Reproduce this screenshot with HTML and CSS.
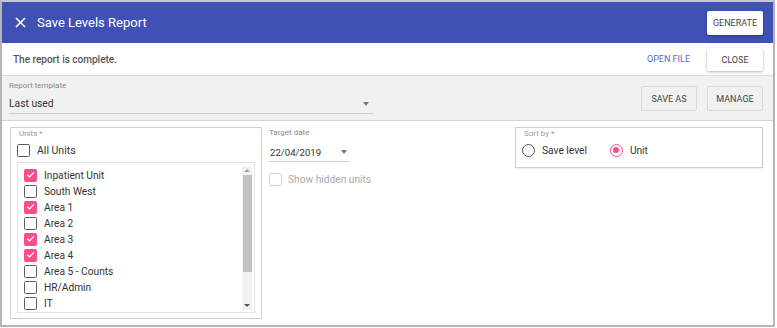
FILE: index.html
```html
<!DOCTYPE html>
<html lang="en">
<head>
    <meta charset="UTF-8">
    <title>Save Levels Report</title>
    <link rel="stylesheet" href="styles.css">
</head>
<body>
    <div class="dialog">
        <div class="header">
            <svg class="close-icon" width="11" height="11" viewBox="0 0 11 11">
                <path d="M1 1L10 10M10 1L1 10" stroke="#fff" stroke-width="1.6" fill="none"/>
            </svg>
            <span class="title">Save Levels Report</span>
            <button class="btn raised">GENERATE</button>
        </div>

        <div class="notice">
            <span class="notice-text">The report is complete.</span>
            <span class="link">OPEN FILE</span>
            <button class="btn raised">CLOSE</button>
        </div>

        <div class="template-row">
            <div class="field template-field">
                <div class="field-label">Report template</div>
                <div class="select">
                    <span>Last used</span>
                    <span class="arrow"></span>
                </div>
            </div>
            <button class="btn outlined">SAVE AS</button>
            <button class="btn outlined">MANAGE</button>
        </div>

        <div class="content">
            <div class="units-box">
                <div class="box-label">Units *</div>
                <div class="check-row all-units">
                    <span class="checkbox"></span>
                    <span>All Units</span>
                </div>
                <div class="unit-list">
                    <div class="items">
                        <div class="check-row"><span class="checkbox checked"><svg width="13" height="13" viewBox="0 0 13 13"><path d="M3.2 6.6l2.3 2.3 4.4-4.6" stroke="#fff" stroke-width="1.2" fill="none"/></svg></span><span>Inpatient Unit</span></div>
                        <div class="check-row"><span class="checkbox"></span><span>South West</span></div>
                        <div class="check-row"><span class="checkbox checked"><svg width="13" height="13" viewBox="0 0 13 13"><path d="M3.2 6.6l2.3 2.3 4.4-4.6" stroke="#fff" stroke-width="1.2" fill="none"/></svg></span><span>Area 1</span></div>
                        <div class="check-row"><span class="checkbox"></span><span>Area 2</span></div>
                        <div class="check-row"><span class="checkbox checked"><svg width="13" height="13" viewBox="0 0 13 13"><path d="M3.2 6.6l2.3 2.3 4.4-4.6" stroke="#fff" stroke-width="1.2" fill="none"/></svg></span><span>Area 3</span></div>
                        <div class="check-row"><span class="checkbox checked"><svg width="13" height="13" viewBox="0 0 13 13"><path d="M3.2 6.6l2.3 2.3 4.4-4.6" stroke="#fff" stroke-width="1.2" fill="none"/></svg></span><span>Area 4</span></div>
                        <div class="check-row"><span class="checkbox"></span><span>Area 5 - Counts</span></div>
                        <div class="check-row"><span class="checkbox"></span><span>HR/Admin</span></div>
                        <div class="check-row"><span class="checkbox"></span><span>IT</span></div>
                        <div class="check-row"><span class="checkbox"></span></div>
                    </div>
                    <div class="scrollbar">
                        <span class="scroll-up"></span>
                        <span class="thumb"></span>
                        <span class="scroll-down"></span>
                    </div>
                </div>
            </div>

            <div class="middle">
                <div class="field date-field">
                    <div class="field-label">Target date</div>
                    <div class="select">
                        <span>22/04/2019</span>
                        <span class="arrow"></span>
                    </div>
                </div>
                <div class="check-row disabled">
                    <span class="checkbox"></span>
                    <span>Show hidden units</span>
                </div>
            </div>

            <div class="sort-box">
                <div class="box-label">Sort by *</div>
                <div class="radios">
                    <div class="radio-row"><span class="radio"></span><span>Save level</span></div>
                    <div class="radio-row"><span class="radio selected"></span><span>Unit</span></div>
                </div>
            </div>
        </div>
    </div>
</body>
</html>
```

FILE: styles.css
```css
body {
    margin: 0;
    font-family: Roboto, "Liberation Sans", sans-serif;
    background-color: #fff;
    color: #333;
}

.dialog {
    width: 775px;
    height: 327px;
    box-sizing: border-box;
    border: 2px solid #b4b4b4;
    border-top-color: #c8c8c8;
    background-color: #fff;
    overflow: hidden;
}

.header {
    height: 41px;
    background-color: #3f51b5;
    display: flex;
    align-items: center;
    padding: 0 10px 0 13px;
}

.close-icon {
    margin-right: 11px;
}

.title {
    color: #fff;
    font-size: 13px;
    flex: 1;
}

.btn {
    font-family: Roboto, "Liberation Sans", sans-serif;
    font-size: 9px;
    color: #444;
    width: 56px;
    padding: 0;
    border-radius: 2px;
    cursor: pointer;
}

.raised {
    height: 24px;
    background-color: #fff;
    border: none;
    box-shadow: 0 1px 3px rgba(0, 0, 0, 0.3);
}

.notice {
    height: 32px;
    display: flex;
    align-items: center;
    padding: 0 10px 0 11px;
    border-bottom: 1px solid #dcdcdc;
}

.notice-text {
    font-size: 10px;
    font-weight: 500;
    color: #555;
    flex: 1;
}

.link {
    font-size: 9px;
    color: #5c6bc0;
    margin-right: 17px;
}

.notice .raised {
    height: 23px;
    margin-top: 1px;
}

.template-row {
    height: 44px;
    background-color: #f1f1f1;
    display: flex;
    align-items: center;
    padding: 0 10px 0 6px;
    border-bottom: 1px solid #d4d4d4;
}

.field-label {
    font-size: 8px;
    color: #888;
    line-height: 10px;
}

.select {
    display: flex;
    align-items: center;
    justify-content: space-between;
    font-size: 10.3px;
    color: #333;
    height: 18px;
    border-bottom: 1px solid #cfcfcf;
    margin-top: 4px;
}

.arrow {
    width: 0;
    height: 0;
    border-left: 3.5px solid transparent;
    border-right: 3.5px solid transparent;
    border-top: 4px solid #777;
    margin-right: 5px;
}

.template-field {
    width: 365px;
    margin-right: auto;
    margin-top: -2px;
    padding-left: 1px;
}

.outlined {
    height: 25px;
    background-color: #f1f1f1;
    border: 1px solid #dadada;
    margin-left: 10px;
    margin-top: 1px;
}

.content {
    display: flex;
    align-items: flex-start;
    padding: 6px 10px 0 8px;
}

.units-box {
    width: 252px;
    height: 192px;
    box-sizing: border-box;
    border: 1px solid #cfcfcf;
    padding: 1px 6px 0 6px;
}

.box-label {
    font-size: 8px;
    color: #999;
    line-height: 10px;
    margin-left: 2px;
}

.check-row {
    display: flex;
    align-items: center;
    height: 16px;
    font-size: 10.2px;
    color: #333;
}

.checkbox {
    width: 13px;
    height: 13px;
    box-sizing: border-box;
    border: 1.5px solid #5a5a5a;
    border-radius: 1.5px;
    margin-right: 7px;
    flex-shrink: 0;
    display: flex;
}

.checkbox.checked {
    background-color: #f64e8b;
    border-color: #f64e8b;
}

.checkbox.checked svg {
    margin: -1.5px;
}

.all-units {
    margin-top: 3px;
    font-size: 10.5px;
}

.unit-list {
    margin-top: 4px;
    height: 151px;
    box-sizing: border-box;
    border: 1px solid #e2e2e2;
    display: flex;
    overflow: hidden;
}

.items {
    flex: 1;
    padding: 4px 0 0 6px;
}

.scrollbar {
    width: 10px;
    margin: 3px 2px 2px 0;
    background-color: #f1f1f1;
    display: flex;
    flex-direction: column;
    align-items: center;
}

.scroll-up,
.scroll-down {
    width: 0;
    height: 0;
    border-left: 3px solid transparent;
    border-right: 3px solid transparent;
    margin: 3px 0;
}

.scroll-up {
    border-bottom: 3px solid #a3a3a3;
}

.scroll-down {
    border-top: 3px solid #555;
    margin-top: auto;
}

.thumb {
    width: 9px;
    height: 97px;
    background-color: #c1c1c1;
}

.middle {
    margin-left: 7px;
    padding-top: 1px;
}

.date-field {
    width: 81px;
}

.date-field .select {
    margin-top: 5px;
    padding-left: 1px;
    font-size: 9.6px;
}

.date-field .arrow {
    margin-right: 3px;
}

.middle .check-row {
    margin-top: 9px;
}

.check-row.disabled {
    color: #aaa;
}

.check-row.disabled .checkbox {
    border-color: #cfcfcf;
    margin-right: 6px;
}

.sort-box {
    margin-left: auto;
    width: 248px;
    height: 41px;
    box-sizing: border-box;
    border: 1px solid #cfcfcf;
    box-shadow: 0 1px 2px rgba(0, 0, 0, 0.08);
    padding: 1px 6px 0 6px;
}

.radios {
    display: flex;
    margin-top: 3px;
}

.radio-row {
    display: flex;
    align-items: center;
    height: 16px;
    font-size: 10.2px;
    color: #333;
    margin-right: 23px;
}

.radio {
    width: 13px;
    height: 13px;
    box-sizing: border-box;
    border: 1.5px solid #555;
    border-radius: 50%;
    margin-right: 7px;
    display: flex;
    align-items: center;
    justify-content: center;
}

.radio.selected {
    border-color: #f64e8b;
}

.radio.selected::after {
    content: "";
    width: 6px;
    height: 6px;
    border-radius: 50%;
    background-color: #f64e8b;
}
```
